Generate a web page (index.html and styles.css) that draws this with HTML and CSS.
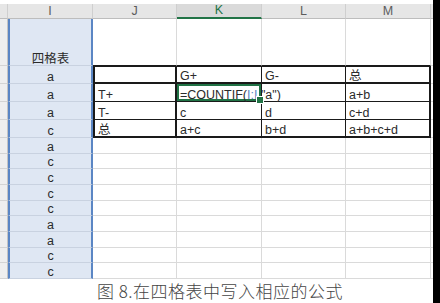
FILE: index.html
```html
<!DOCTYPE html>
<html lang="zh">
  <head>
    <meta charset="UTF-8" />
    <meta name="viewport" content="width=device-width, initial-scale=1.0" />
    <title>四格表公式</title>
    <link rel="stylesheet" href="styles.css">
  </head>
  <body>
    <div class="page">
      <div class="main">
        <div class="sheet">
          <!-- 列标 -->
          <div class="hd"></div>
          <div class="hd">I</div>
          <div class="hd">J</div>
          <div class="hd on">K</div>
          <div class="hd">L</div>
          <div class="hd">M</div>
          <div class="hd last"></div>

          <!-- 第一行 -->
          <div class="rh"></div>
          <div class="c sel">四格表</div>
          <div class="c up"></div>
          <div class="c up"></div>
          <div class="c up"></div>
          <div class="c up"></div>
          <div class="c last"></div>

          <!-- 四格表 -->
          <div class="rh"></div>
          <div class="c sel">a</div>
          <div class="c t top bot lft rgt"></div>
          <div class="c t top bot">G+</div>
          <div class="c t top bot">G-</div>
          <div class="c t top bot rgt">总</div>
          <div class="c last"></div>

          <div class="rh"></div>
          <div class="c sel">a</div>
          <div class="c t lft rgt">T+</div>
          <div class="c t active">=COUNTIF(<span class="ref">I:I</span>,"a")</div>
          <div class="c t"></div>
          <div class="c t rgt">a+b</div>
          <div class="c last"></div>

          <div class="rh"></div>
          <div class="c sel">a</div>
          <div class="c t lft rgt">T-</div>
          <div class="c t">c</div>
          <div class="c t">d</div>
          <div class="c t rgt">c+d</div>
          <div class="c last"></div>

          <div class="rh"></div>
          <div class="c sel">c</div>
          <div class="c t lft rgt bot">总</div>
          <div class="c t bot">a+c</div>
          <div class="c t bot">b+d</div>
          <div class="c t bot rgt">a+b+c+d</div>
          <div class="c last"></div>

          <!-- 其余数据 -->
          <div class="rh"></div><div class="c sel">a</div><div class="c"></div><div class="c"></div><div class="c"></div><div class="c"></div><div class="c last"></div>
          <div class="rh"></div><div class="c sel">c</div><div class="c"></div><div class="c"></div><div class="c"></div><div class="c"></div><div class="c last"></div>
          <div class="rh"></div><div class="c sel">c</div><div class="c"></div><div class="c"></div><div class="c"></div><div class="c"></div><div class="c last"></div>
          <div class="rh"></div><div class="c sel">c</div><div class="c"></div><div class="c"></div><div class="c"></div><div class="c"></div><div class="c last"></div>
          <div class="rh"></div><div class="c sel">c</div><div class="c"></div><div class="c"></div><div class="c"></div><div class="c"></div><div class="c last"></div>
          <div class="rh"></div><div class="c sel">a</div><div class="c"></div><div class="c"></div><div class="c"></div><div class="c"></div><div class="c last"></div>
          <div class="rh"></div><div class="c sel">a</div><div class="c"></div><div class="c"></div><div class="c"></div><div class="c"></div><div class="c last"></div>
          <div class="rh"></div><div class="c sel">c</div><div class="c"></div><div class="c"></div><div class="c"></div><div class="c"></div><div class="c last"></div>
          <div class="rh"></div><div class="c sel">c</div><div class="c"></div><div class="c"></div><div class="c"></div><div class="c"></div><div class="c last"></div>
        </div>
        <p class="caption">图 8.在四格表中写入相应的公式</p>
      </div>
      <div class="edge"></div>
    </div>
  </body>
</html>
```

FILE: styles.css
```css
* {
  box-sizing: border-box;
}
body {
  margin: 0;
  background: #fff;
  color: #2b2b2b;
  font-family: "Liberation Sans", "Noto Sans CJK SC", sans-serif;
}
.page {
  display: flex;
  width: 440px;
  height: 303px;
}
.main {
  width: 433px;
  padding-top: 4px;
}
.edge {
  width: 7px;
  background: #000;
}
.sheet {
  display: grid;
  grid-template-columns: 8px 85px 84px 85px 84px 85px 2px;
  grid-template-rows: 15px 47px repeat(4, 18px) repeat(9, 15.67px);
  font-size: 12.5px;
}
.hd {
  display: flex;
  align-items: center;
  justify-content: center;
  background: #e6e6e6;
  border-right: 1px solid #cfcfcf;
  border-bottom: 1px solid #bdbdbd;
  color: #5c5c5c;
  font-size: 12.5px;
  line-height: 1;
}
.hd.on {
  background: #dadada;
  color: #217346;
  border-bottom: 2px solid #217346;
}
.hd.last {
  border-right: none;
}
.rh {
  background: #efefef;
  border-right: 1px solid #c4c4c4;
  border-bottom: 1px solid #d4d4d4;
}
.c {
  display: flex;
  align-items: flex-end;
  padding: 0 3px;
  border-right: 1px solid #dadada;
  border-bottom: 1px solid #dadada;
  line-height: 11px;
  white-space: nowrap;
}
.c.last {
  border-right: none;
}
.c.up {
  border-bottom: 1px solid #1a1a1a;
}
.sel {
  justify-content: center;
  background: #dfe7f3;
  border-left: 2px solid #5b86c4;
  border-right: 2px solid #5b86c4;
  border-bottom-color: #c9d2e0;
}
.t {
  border-right-color: #1a1a1a;
  border-bottom-color: #1a1a1a;
}
.top {
  border-top: 1px solid #1a1a1a;
}
.bot {
  border-bottom: 2px solid #1a1a1a;
}
.lft {
  border-left: 2px solid #1a1a1a;
}
.rgt {
  border-right: 2px solid #1a1a1a;
}
.active {
  position: relative;
  box-shadow: inset 0 0 0 2px #217346;
}
.active::after {
  content: "";
  position: absolute;
  right: -3px;
  bottom: -3px;
  width: 6px;
  height: 6px;
  background: #217346;
  border: 1px solid #fff;
}
.ref {
  color: #5b86c4;
}
.caption {
  margin: 0;
  padding-left: 7px;
  text-align: center;
  font-family: "Noto Sans CJK SC", sans-serif;
  font-size: 17px;
  font-weight: 300;
  letter-spacing: 0.5px;
  line-height: 24px;
  color: #444;
}
```
